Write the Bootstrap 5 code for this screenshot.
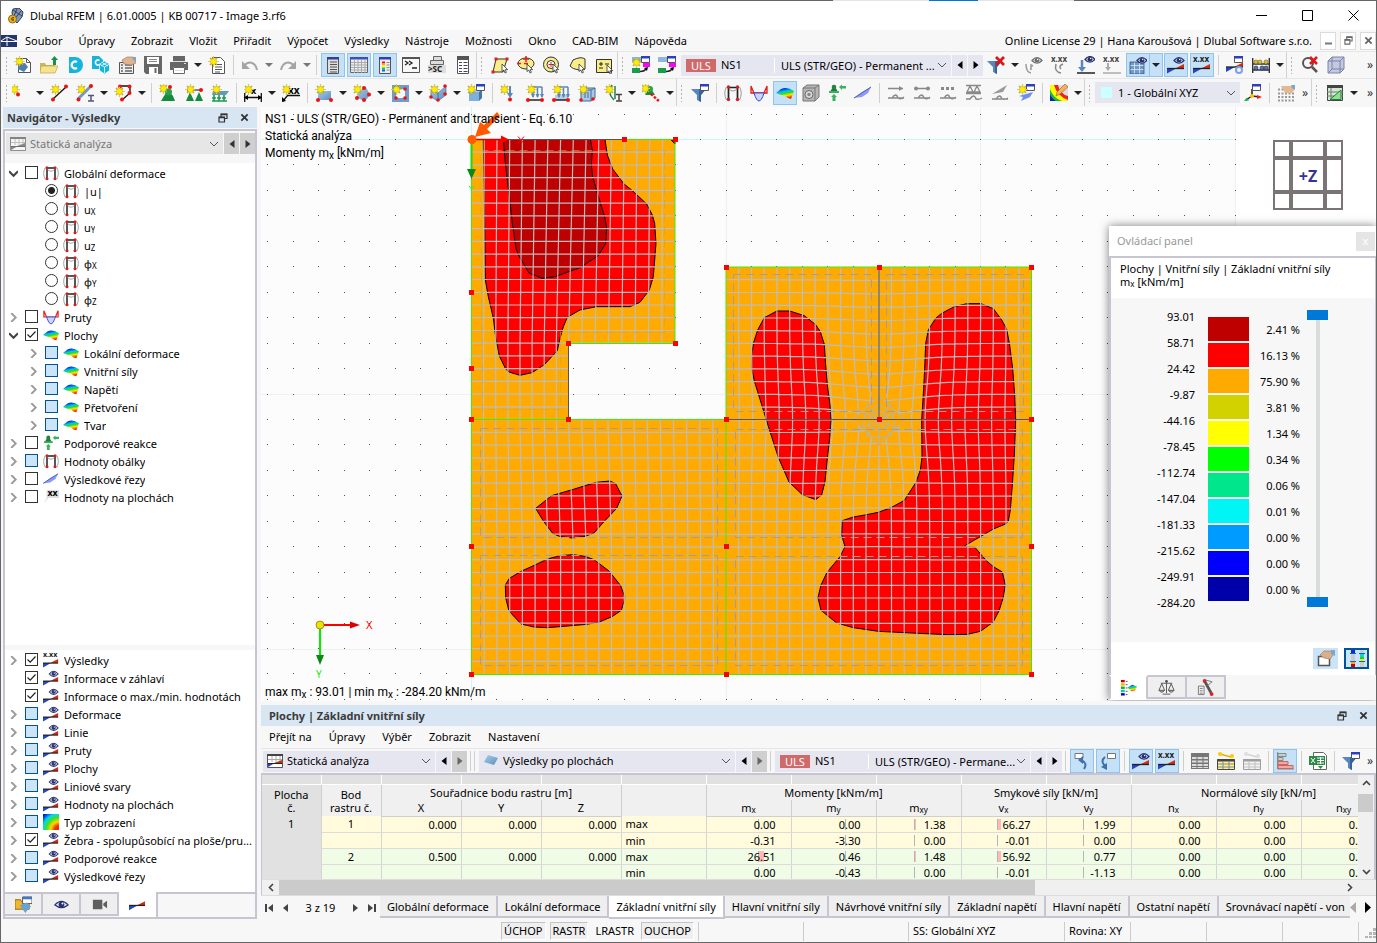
<!DOCTYPE html>
<html lang="cs">
<head>
<meta charset="utf-8">
<meta name="viewport" content="width=device-width, initial-scale=1">
<title>Dlubal RFEM | 6.01.0005 | KB 00717 - Image 3.rf6</title>
<link href="https://cdn.jsdelivr.net/npm/bootstrap@5.3.0/dist/css/bootstrap.min.css" rel="stylesheet">
<style>
  :root { --chrome:#f7f7f7; --field:#e6e6f0; --edge:#c8c5d2; --press:#c5e1f7; --pressed-edge:#8ec4ee; --head:#d8e5f3; }
  body { font-family:"Noto Sans","Open Sans",sans-serif; font-size:11px; line-height:16px; color:#000; background:var(--chrome); }
  .app { border:1px solid #666; border-top:0; }
  .topedge { height:1px; background:linear-gradient(90deg,#666 60.5%,#e5e5e5 0 67.5%,#0078d7 0 71%,#e5e5e5 0 78%,#666 0); }
  button { border:0; background:none; padding:0; color:inherit; }
  a { color:inherit; text-decoration:none; }
  sub { font-size:8px; bottom:-1px; }
  svg { display:block; flex:none; }
  symbol { overflow:visible; }

  /* Title bar, menu and tool bars */
  .titlebar { height:29px; background:#fff; padding-left:7px; gap:6px; }
  .titlebar h1 { font-size:11px; line-height:16px; font-weight:400; margin:0; }
  .wbtn { width:46px; height:29px; display:flex; align-items:center; justify-content:center; }
  .menubar { height:21px; }
  .menubar .nav { gap:16px; }
  .mdi { width:16px; height:18px; border:1px solid #dcdcdc; background:#fff; display:flex; align-items:center; justify-content:center; }
  .toolrow { height:27px; border-top:1px solid #e6e6e6; padding-left:9px; overflow:hidden; }
  .toolrow.second { height:29px; padding:0 0 1px 7px; }
  .grip { width:3px; height:18px; background:radial-gradient(circle,#b4b4b4 1px,transparent 1px) 0 0/3px 4px; flex:none; }
  .toolrow > .grip.first { margin:0 2px 0 -5px; }
  .second > .grip.first { margin:0 0 0 -3px; }
  .tb { width:24px; height:24px; margin:0 1px; flex:none; display:flex; align-items:center; justify-content:center; border:1px solid transparent; }
  .tb svg { width:18px; height:18px; }
  .tb.on { background:var(--press); border-color:var(--pressed-edge); }
  .dd { width:12px; height:24px; flex:none; display:flex; align-items:center; justify-content:center; }
  .dd::after { content:""; border:4px solid transparent; border-top-color:#222; border-bottom:0; }
  .dd.dim::after { border-top-color:#777; }
  .dd.on { background:var(--press); border:1px solid var(--pressed-edge); border-left:0; margin-left:-1px; width:13px; }
  .vs { width:1px; height:20px; margin:0 3px; background:#cfcfcf; flex:none; }
  .gs { width:11px; height:27px; border-left:1px solid #d2d2d2; display:flex; align-items:center; padding-left:3px; flex:none; }
  .more { width:12px; font-size:12px; color:#333; flex:none; text-align:center; }
  .fieldbox { height:21px; background:var(--field); display:flex; align-items:center; flex:none; }
  .pick { appearance:none; border:0; border-radius:0; height:21px; line-height:16px; padding:0 15px 0 0; color:#000; font-size:11px; min-width:0; outline:0;
    background:transparent url("data:image/svg+xml,%3Csvg xmlns='http://www.w3.org/2000/svg' viewBox='0 0 10 6'%3E%3Cpath d='M1 1l4 4 4-4' fill='none' stroke='%23555'/%3E%3C/svg%3E") right 4px center/10px 6px no-repeat; }
  .tagu { background:#d0696a; color:#fff; width:30px; height:13px; line-height:13px; text-align:center; margin:0 5px; }
  .nsn { width:53px; }
  .lc1 { width:270px; margin-left:1px; }
  .lc2 { width:255px; margin-left:1px; }
  .lcpick { flex:1; border-left:1px solid #fff; padding-left:6px; height:15px; line-height:15px; }
  .swatch { width:11px; height:11px; background:#cff; margin:0 6px 0 6px; }
  .cspick { width:122px; }
  .anpick { width:152px; }
  .srpick { width:236px; }
  .step { width:15px; height:21px; background:var(--field); margin-left:1px; flex:none; display:flex; align-items:center; justify-content:center; }
  .step.off { background:#cfcfcf; color:#666; }
  .step svg { width:6px; height:8px; fill:currentColor; }

  /* Navigator */
  .panehead { height:21px; background:var(--head); color:#3b3b3b; padding:0 4px; }
  .panehead h2 { font-size:11px; line-height:16px; font-weight:700; margin:0; }
  .side { width:260px; padding-left:2px; flex:none; }
  .side .panehead { width:254px; }
  .sideframe { border:2px solid var(--edge); width:254px; margin-top:1px; background:#fff; }
  .sidepick { background:var(--chrome); padding:2px 0 9px 1px; }
  .sidepick .fieldbox { background:#e6e6e6; flex:1; }
  .sidepick .pick { color:#777; opacity:1; }
  .sidepick .step { background:#cfcfcf; color:#333; }
  .tree { list-style:none; margin:0; padding:1px 0 0 0; }
  .tree li { height:18px; display:flex; align-items:center; white-space:nowrap; overflow:hidden; }
  .tree label { overflow:hidden; text-overflow:ellipsis; padding-top:2px; }
  .tree .sp, .tree button { width:20px; height:16px; flex:none; display:flex; align-items:center; padding-left:4px; }
  .tree .in { width:20px; flex:none; }
  .tree input { appearance:none; width:13px; height:13px; border:1px solid #333; background:#fff center/11px 11px no-repeat; margin:0 5px 2px 0; flex:none; }
  .tree input[type=radio] { border-radius:50%; }
  .tree input[type=radio]:checked { background-image:radial-gradient(circle,#222 3px,transparent 4px); }
  .tree input[type=checkbox]:checked { background-image:url("data:image/svg+xml,%3Csvg xmlns='http://www.w3.org/2000/svg' viewBox='0 0 11 11'%3E%3Cpath d='M1.500 5.500l2.700 2.700L9.500 2.500' fill='none' stroke='%23222' stroke-width='1.200'/%3E%3C/svg%3E"); }
  .tree input.part { background-color:#cce4f7; border-color:#00539a; }
  .tree li > svg { width:16px; height:16px; margin:0 5px 1px 0; }
  .split { height:5px; background:var(--chrome); }
  .sidetabs { background:var(--chrome); border-top:2px solid var(--edge); height:25px; margin-top:7px; }
  .sidetabs button { width:38px; height:22px; border-right:2px solid var(--edge); border-bottom:2px solid var(--edge); background:#efefef; display:flex; align-items:center; justify-content:center; }
  .sidetabs .on { background:#fff; margin-top:-2px; height:25px; width:39px; border-bottom:0; }
  .sidetabs svg { width:17px; height:17px; }

  /* Model view and control panel */
  .view { background:#fff; overflow:hidden; min-height:0; }
  .view > svg { width:100%; height:100%; }
  .note { font-family:Roboto,"Noto Sans",sans-serif; font-size:12px; line-height:17px; }
  .note sub { font-size:10px; bottom:-2px; line-height:0; }
  .cube { top:33px; right:33px; width:70px; height:70px; background:#7a7574; display:grid; grid-template-columns:14px 30px 14px; grid-template-rows:14px 30px 14px; gap:4px; padding:2px; box-sizing:border-box; }
  .cube > * { background:#fff; }
  .cube b { color:#333399; font-size:16px; line-height:32px; text-align:center; }
  .control { right:0; bottom:1px; width:267px; background:#fff; box-shadow:0 0 9px rgba(0,0,0,.5); }
  .ctitle { height:30px; padding:0 1px 0 8px; color:#999; }
  .ctitle h2 { font-size:11px; line-height:16px; margin:0; font-weight:400; }
  .ctitle button { width:19px; height:19px; background:#e5e5e5; color:#fff; }
  .cbody { border:2px solid var(--edge); border-right-width:1px; border-bottom:0; }
  .ccap { line-height:13px; padding:4px 9px 10px; height:40px; }
  .legend { background:var(--chrome); height:344px; line-height:26px; }
  .lv { width:84px; padding-top:6px; text-align:right; }
  .ls { width:41px; margin-left:13px; padding-top:19px; }
  .ls i { display:block; height:24px; margin-bottom:2px; }
  .lp { width:51px; padding-top:19px; text-align:right; }
  .slide { width:21px; height:297px; margin:12px 0 0 7px; position:relative; background:linear-gradient(#d9dcdc,#d9dcdc) center/4px 100% no-repeat; }
  .slide input { position:absolute; top:0; left:21px; width:297px; height:21px; margin:0; appearance:none; background:none; transform-origin:0 0; transform:rotate(90deg); pointer-events:none; }
  .slide input::-webkit-slider-thumb { appearance:none; width:10px; height:21px; background:#0078d7; pointer-events:auto; }
  .cbtns { height:33px; gap:6px; padding-right:6px; }
  .cbtns button { width:25px; height:21px; background:#cce4f7; display:flex; align-items:center; justify-content:center; }
  .cbtns .on { border:2px solid #00539a; }
  .cbtns svg { width:18px; height:17px; }
  .ctabs { height:25px; background:var(--chrome); }
  .ctabs button { width:39px; height:24px; border:2px solid var(--edge); border-left:0; background:#efefef; display:flex; align-items:center; justify-content:center; }
  .ctabs .on { background:#fff; border-top-color:#fff; border-bottom-color:#fff; border-left:2px solid var(--edge); height:25px; }
  .ctabs svg { width:17px; height:17px; }

  /* Result table */
  .tpane { margin-top:4px; }
  .tmenu { height:22px; gap:17px; padding:0 8px; }
  .ttools { height:25px; border-top:1px solid #e6e6e6; padding-left:2px; overflow:hidden; }
  .tgrid { border:2px solid var(--edge); border-left-width:1px; border-bottom:1px solid #ddd; height:107px; overflow:hidden; }
  .tgrid table { width:1124px; flex:none; table-layout:fixed; border-collapse:collapse; }
  .tscroll { overflow:hidden; flex:1 1 0; min-width:0; }
  .w59 { width:59px; } .w60 { width:60px; } .w80 { width:80px; } .w85 { width:85px; }
  .tgrid th, .tgrid td { border-right:1px solid #d5d5d5; padding:0; height:16px; line-height:15px; font-weight:400; white-space:nowrap; overflow:hidden; }
  .tgrid th { background:#f0f0f0; text-align:center; border-color:#cfcfcf; }
  .tgrid .strip th { height:9px; background:#e1e1e1; border-right-color:#fff; border-bottom:1px solid #fff; }
  .tgrid .two { line-height:13px; padding-top:3px; vertical-align:top; }
  .tgrid .lead0 { background:#e1e1e1; }
  .tgrid .hd th { border-bottom:1px solid #cfcfcf; vertical-align:top; }
  .tgrid .grp { border-bottom:0; vertical-align:top; }
  .tgrid td { border-bottom:1px solid #dcdcdc; text-align:right; padding-right:15px; }
  .tgrid td.c { text-align:center; padding:0; } .tgrid td.l { text-align:left; padding-left:4px; } .tgrid td.n { padding-right:4px; }
  .tgrid .y td { background-color:#fffbdc; } .tgrid .g td { background-color:#f0fce6; }
  .tgrid td.lead0 { background:#e1e1e1; vertical-align:top; border-bottom:0; }
  .tgrid td.m { background-image:linear-gradient(#b5b5b5,#b5b5b5),linear-gradient(#ffb9b9,#ffb9b9); background-repeat:no-repeat; background-size:1px 11px,var(--bar,0) 11px; background-position:var(--at) 2px,var(--at) 2px; }
  .vbar { width:16px; background:#f0f0f0; flex:none; }
  .vbar .thumb { height:18px; background:#cbcbcb; width:15px; }
  .hbar { height:15px; background:#f0f0f0; border-left:1px solid var(--edge); padding-right:18px; }
  .hbar .thumb { height:15px; background:#cbcbcb; flex:0 0 69%; }
  .sb { width:17px; height:15px; display:flex; align-items:center; justify-content:center; flex:none; }
  .ftabs { height:24px; border-top:1px solid #ddd; overflow:hidden; }
  .ftabs .pager { width:119px; flex:none; padding:0 4px; }
  .pager svg { width:9px; height:8px; fill:#444; }
  .ftab { height:22px; line-height:21px; padding:0 7px; border:2px solid var(--edge); border-left:0; border-top:0; background:#efefef; white-space:nowrap; flex:none; }
  .ftab.on { background:#fff; height:23px; line-height:22px; }
  .ftab.cut { flex:0 1 132px; overflow:hidden; border-right:0; text-align:left; }

  /* Status bar */
  .status { height:23px; padding-top:3px; gap:4px; }
  .status button { height:18px; padding:0 2px; line-height:16px; border:1px solid #c4c4c4; border-right-color:#fff; border-bottom-color:#fff; background:#efefef; }
  .status button.flat { border-color:transparent; background:none; }
  .cell { height:19px; line-height:18px; border-left:1px solid #ccc; padding-left:4px; flex:none; }
  .s1 { width:105px; } .s2 { width:156px; } .s3 { width:66px; } .s4 { width:76px; } .s5 { width:18px; padding-left:3px; }
</style>
</head>
<body>
<svg width="0" height="0" class="position-absolute" aria-hidden="true">
<defs>
<linearGradient id="rb" x1=".3" x2=".6" y1="0" y2="1"><stop offset=".1" stop-color="#0030e0"/><stop offset=".35" stop-color="#00c8f0"/><stop offset=".5" stop-color="#20e020"/><stop offset=".7" stop-color="#ffe600"/><stop offset=".95" stop-color="#f02000"/></linearGradient>
<radialGradient id="rq" cx="1" cy="1" r="1.300"><stop offset=".2" stop-color="#f03000"/><stop offset=".4" stop-color="#ffd800"/><stop offset=".6" stop-color="#40e020"/><stop offset=".78" stop-color="#00d8f0"/><stop offset="1" stop-color="#0020d0"/></radialGradient>
<linearGradient id="bl" x1="0" x2="1" y1="0" y2="1"><stop offset="0" stop-color="#a9cbe8"/><stop offset="1" stop-color="#5d8fbd"/></linearGradient>
<g id="star"><path d="M5.500.5v10M.5 5.500h10M2 2l7 7M9 2L2 9" stroke="#a08c28" stroke-width="1.200"/><path d="M5.500 1v9M1 5.500h9M2.500 2.500l6 6M8.500 2.500l-6 6" stroke="#ffe900" stroke-width=".8"/><circle cx="5.500" cy="5.500" r="3" fill="#ffec00" stroke="#b9a421" stroke-width=".5"/></g>
<g id="win"><path d="M.5.5h8v6h-8z" fill="#fff" stroke="#555"/><path d="M0 0h9v2.500H0z" fill="#2b3fbf"/></g>
<g id="cur"><path d="M0 0v7.500l1.800-1.500 1.200 3 1.400-.6-1.200-2.800H5.700z" fill="#fff" stroke="#333" stroke-width=".8"/></g>
<g id="eye"><path d="M0 3.500Q5-2.500 10 3.500 5 9 0 3.500z" fill="#ccd2ec" stroke="#26306e" stroke-width="1.200"/><circle cx="5" cy="3.300" r="2.300" fill="#26306e"/><circle cx="5.700" cy="2.500" r=".7" fill="#fff"/></g>
<g id="wedge"><path d="M0 0h9L0 5z" fill="#2446c8"/><path d="M17-4.500V0H8z" fill="#d42c10"/><path d="M0 0h17" stroke="#222" stroke-width="1.300"/></g>
<symbol id="logo" viewBox="0 0 16 16"><path d="M5 1l6-1 4 4-1 5-5 6-4-4-1-7z" fill="#7f97b8" stroke="#333f59"/><path d="M5 2l9 6M9 1l-4 9M13 3L6 12" stroke="#33415e" fill="none"/><circle cx="4.500" cy="11" r="4" fill="#eab320" stroke="#8d6a12"/><path d="M6 9.500Q3.500 9 3.500 11.500 4 13 5.500 12.300 6 10.500 3.800 11" fill="none" stroke="#5d4300"/></symbol>
<symbol id="i-new" viewBox="0 0 18 18"><path d="M4.500 2.500h8l4 4v10h-12z" fill="#fff" stroke="#555"/><path d="M12.500 2.500v4h4" fill="none" stroke="#555"/><path d="M4 8l7-1 3 4-4 5-6-3z" fill="#4f7fb0"/><use href="#star"/></symbol>
<symbol id="i-open" viewBox="0 0 18 18"><path d="M0 7h5l1 2h9v8H0z" fill="#cdb65b"/><path d="M1 10h17l-3 7H0z" fill="#f5e38d" stroke="#b69c3e" stroke-width=".6"/><path d="M13 9V4h-2l3.500-4L18 4h-2v5z" fill="#14934a"/></symbol>
<symbol id="i-c" viewBox="0 0 18 18"><path d="M3 1h6a8 8 0 0 1 0 16H3z" fill="#14b4dc"/><path d="M11 6a3.500 3.500 0 1 0 0 6" fill="none" stroke="#fff" stroke-width="2.200"/></symbol>
<symbol id="i-blk" viewBox="0 0 18 18"><path d="M0 0h7l4 4v9H0z" fill="#14b4dc"/><path d="M7.500 4.500a2.500 2.500 0 1 0 0 4" fill="none" stroke="#fff" stroke-width="1.500"/><path d="M12.500 5l5 3v6.500l-5 3.500-5-3.500V8z" fill="#14b4dc" stroke="#fff" stroke-width=".7"/><path d="M7.500 8l5 3 5-3M12.500 11v6M10 6.500l6 3.500M15 6.500L9 10" stroke="#fff" fill="none" stroke-width=".8"/></symbol>
<symbol id="i-prop" viewBox="0 0 18 18"><path d="M1.500 6.500h14v11h-14z" fill="#eee" stroke="#555"/><path d="M3 9h2M3 12h2M3 15h2M7 9h7M7 12h7M7 15h7" stroke="#666" stroke-width="1.500"/><path d="M4 4l5-3 6 0 3 2v4l-5 2-7-1z" fill="#e0b48f" stroke="#9c7350" stroke-width=".6"/><path d="M14 1h4v5l-3-2z" fill="#7ea6c9"/></symbol>
<symbol id="i-save" viewBox="0 0 18 18"><path d="M0 0h18v18H2l-2-2z" fill="#676767"/><path d="M3 1h12v7H3zM5 11h9v7H5z" fill="#fff"/><path d="M5 3.500h8M5 5.500h8" stroke="#888"/><path d="M10.500 12h2v5h-2z" fill="#676767"/></symbol>
<symbol id="i-prn" viewBox="0 0 18 18"><path d="M3 0h12v6H3z" fill="#666"/><path d="M0 6h18v8h-3v-3H3v3H0z" fill="#666"/><path d="M3.500 11.500h11v6h-11z" fill="#fff" stroke="#666"/><path d="M5 14.500h8M14 7.500h2M3 5.500h12" stroke="#ddd"/></symbol>
<symbol id="i-rep" viewBox="0 0 18 18"><path d="M4.500 1.500h8l4 4v12h-12z" fill="#fff" stroke="#555"/><path d="M7 8.500h7M7 11h7M7 13.500h7M7 16h5" stroke="#555"/><use href="#star"/></symbol>
<symbol id="i-undo" viewBox="0 0 18 18"><path d="M3 10C7 5 14 5 16 14" fill="none" stroke="#a5a5a5" stroke-width="2"/><path d="M1 5v8h8z" fill="#a5a5a5"/></symbol>
<symbol id="i-redo" viewBox="0 0 18 18"><path d="M15 10C11 5 4 5 2 14" fill="none" stroke="#a5a5a5" stroke-width="2"/><path d="M17 5v8h-8z" fill="#a5a5a5"/></symbol>
<symbol id="i-nav" viewBox="0 0 18 18"><path d="M3.500 1.500h11v16h-11z" fill="#ddd" stroke="#555"/><path d="M3 1h12v2.500H3z" fill="#333f8f"/><path d="M6 6h7M6 8.500h7M6 11h7M6 13.500h7M6 16h7" stroke="#555"/></symbol>
<symbol id="i-tab" viewBox="0 0 18 18"><path d="M.5 1.500h17v15H.500z" fill="#eee" stroke="#666"/><path d="M0 1h18v2.500H0z" fill="#3b4fc4"/><path d="M1 6.500h16M1 9h16M1 11.500h16M1 14h16M4.500 4v13M8 4v13M11.500 4v13M15 4v13" stroke="#aaa"/></symbol>
<symbol id="i-leg" viewBox="0 0 18 18"><path d="M3.500 1.500h11v16h-11z" fill="#eee" stroke="#555"/><path d="M3 1h12v2.500H3z" fill="#2b3fbf"/><path d="M6 5.500h3v2H6z" fill="red"/><path d="M6 7.500h3v2H6z" fill="#fa0"/><path d="M6 9.500h3v2H6z" fill="#ff0"/><path d="M6 11.500h3v2H6z" fill="#0c6"/><path d="M6 13.500h3v2H6z" fill="#06f"/><path d="M10.500 6.500h3M10.500 9h3M10.500 11.500h3M10.500 14h3" stroke="#888"/></symbol>
<symbol id="i-con" viewBox="0 0 18 18"><path d="M.5 1.500h17v15H.500z" fill="#f7f7f7" stroke="#555"/><path d="M0 1h18v2H0z" fill="#555"/><path d="M3 5l3 2-3 2M7 5l3 2-3 2M10 12h5" fill="none" stroke="#222" stroke-width="1.300"/></symbol>
<symbol id="i-sc" viewBox="0 0 18 18"><path d="M5.500.5h8v4h-8zM2.500 4.500h13v4h-13z" fill="#ddd" stroke="#666"/><path d="M0 9h18v8H0z" fill="#ddd"/><text x="0" y="16" font-size="8" font-weight="700" fill="#222">&gt;SC</text></symbol>
<symbol id="i-calc" viewBox="0 0 18 18"><path d="M3.500.5h11v17h-11z" fill="#fff" stroke="#555"/><path d="M3 0h12v4H3z" fill="#555"/><path d="M5 6.500h3M5 9.500h3M5 12.500h3M5 15.500h3M9.500 6.500h4M9.500 9.500h4M9.500 12.500h4M9.500 15.500h4" stroke="#446"/></symbol>
<symbol id="s-poly" viewBox="0 0 18 18"><path d="M5 3h11l-4 13H2z" fill="#f7ee8a" stroke="#333"/><path d="M3.500 1.500h3v3h-3zM14.500 1.500h3v3h-3zM.5 14.500h3v3h-3z" fill="#d22"/><use href="#cur" x="11" y="8"/></symbol>
<symbol id="s-ell" viewBox="0 0 18 18"><ellipse cx="9" cy="7.500" rx="8" ry="5.500" fill="#f7ee8a" stroke="#333"/><path d="M9 0v6M6 3h6M0 7.500h4M7 7.500h4" stroke="#d22" stroke-width="1.500"/><use href="#cur" x="10" y="8"/></symbol>
<symbol id="s-cir" viewBox="0 0 18 18"><circle cx="8" cy="8.500" r="7.500" fill="#f7ee8a" stroke="#333"/><circle cx="8" cy="8.500" r="4" fill="#fff" stroke="#333"/><path d="M8 6v5M5.500 8.500h5" stroke="#d22"/><use href="#cur" x="10" y="8"/></symbol>
<symbol id="s-fre" viewBox="0 0 18 18"><path d="M4 4q8-4 12-1v10q-4 2-6 1-7-1-9-4z" fill="#f7ee8a" stroke="#333"/><use href="#cur" x="10" y="8"/></symbol>
<symbol id="s-pm" viewBox="0 0 18 18"><path d="M1.500 3.500h15v13h-15z" fill="#f7ee8a" stroke="#333"/><path d="M4 8h4M6 6v4M4 12h4M10 8h4" stroke="#222"/><use href="#cur" x="12" y="9"/></symbol>
<symbol id="i-lc" viewBox="0 0 18 18"><path d="M0 1h9v5H0z" fill="#8fb5e0"/><use href="#win" x="9" y="0"/><path d="M11 7h7v4h-7z" fill="#f0f"/><path d="M0 12h8v5H0z" fill="#1a9c4c"/><path d="M8 15.500q5 0 6-3" fill="none" stroke="#222" stroke-width="1.500"/><path d="M16 11l-4 1 3 3z"/></symbol>
<symbol id="i-lcn" viewBox="0 0 18 18"><use href="#i-lc"/><use href="#star" x="-1" y="1"/></symbol>
<symbol id="i-flt" viewBox="0 0 18 18"><path d="M0 5h15l-5 6v7l-4-2v-5z" fill="#5a86bb"/><path d="M8 5h7l-5 6v7l-2-1z" fill="#34649e"/></symbol>
<symbol id="i-fltx" viewBox="0 0 18 18"><use href="#i-flt"/><path d="M9 1l8 8M17 1L9 9" stroke="#d81818" stroke-width="2.800"/></symbol>
<symbol id="i-fltw" viewBox="0 0 18 18"><use href="#i-flt"/><use href="#win" x="9" y="0"/></symbol>
<symbol id="g-eye" viewBox="0 0 18 18" opacity=".7"><use href="#eye" x="7" y="1" style="filter:grayscale(1)"/><path d="M1 8q0 8 5 9M6 8v6q-1-3 2-5" fill="none" stroke="#777" stroke-width="1.500"/></symbol>
<symbol id="g-xx" viewBox="0 0 18 18"><text x="0" y="6" font-size="8" font-weight="700" fill="#444">x.xx</text><path d="M5 8q-2 8 5 9M12 8q-5 2-2 5" fill="none" stroke="#888" stroke-width="1.500"/></symbol>
<symbol id="l-eye" viewBox="0 0 18 18"><use href="#eye" x="8"/><path d="M5 4v8" stroke="#5b87bb" stroke-width="2.500"/><path d="M1 11h8l-4 5z" fill="#5b87bb"/><path d="M0 17h18" stroke="#222" stroke-width="1.500"/></symbol>
<symbol id="l-xx" viewBox="0 0 18 18"><text x="0" y="6" font-size="8" font-weight="700" fill="#444">x.xx</text><path d="M5 7v5" stroke="#aaa" stroke-width="2"/><path d="M2 11h6l-3 4z" fill="#aaa"/><path d="M0 17h18" stroke="#aaa" stroke-width="1.500"/></symbol>
<symbol id="m-eye" viewBox="0 0 18 18"><path d="M1 6h14v12H1z" fill="#6f9cc8"/><path d="M1 9.500h14M1 13.500h14M5.500 6v12M10.500 6v12" stroke="#dbe8f5" stroke-width=".8"/><path d="M1 6h14v12H1z" fill="none" stroke="#2c3f66" stroke-width=".7"/><use href="#eye" x="8" y="1"/></symbol>
<symbol id="w-eye" viewBox="0 0 18 18"><use href="#eye" x="7" y="1"/><use href="#wedge" y="12.500"/></symbol>
<symbol id="w-xx" viewBox="0 0 18 18"><text x="0" y="6" font-size="8" font-weight="700" fill="#222">x.xx</text><use href="#wedge" y="12.500"/></symbol>
<symbol id="w-win" viewBox="0 0 18 18"><use href="#win" x="8"/><use href="#wedge" y="11"/><circle cx="13" cy="14" r="3" fill="none" stroke="#7aa0e8" stroke-width="2"/></symbol>
<symbol id="w-only" viewBox="0 0 18 18"><use href="#wedge" y="10"/></symbol>
<symbol id="i-aba" viewBox="0 0 18 18"><path d="M.7 2v15M17.300 2v15M0 8h18M0 14h18" stroke="#333" stroke-width="1.400"/><g fill="#d8c23c" stroke="#6b5b11" stroke-width=".6"><circle cx="4" cy="6" r="2"/><circle cx="8" cy="6" r="2"/><circle cx="14" cy="6" r="2"/></g><g fill="#5673c9" stroke="#222" stroke-width=".6"><circle cx="4" cy="12" r="2"/><circle cx="10" cy="12" r="2"/><circle cx="14" cy="12" r="2"/></g></symbol>
<symbol id="i-zx" viewBox="0 0 18 18"><circle cx="7" cy="7" r="5" fill="none" stroke="#555" stroke-width="2"/><path d="M11 11l5 5" stroke="#555" stroke-width="2.500"/><path d="M9 1l7 7M16 1L9 8" stroke="#e01818" stroke-width="2.600"/></symbol>
<symbol id="i-cub" viewBox="0 0 18 18"><path d="M1 5l4-4h12v12l-4 4H1z" fill="#c3c9e0" stroke="#7b84a8"/><path d="M1 5h12v12M13 5l4-4M5 1v12h12M1 17l4-4" fill="none" stroke="#7b84a8"/></symbol>
<symbol id="a-node" viewBox="0 0 18 18"><use href="#star" x="-3"/><circle cx="6" cy="10.500" r="2" fill="#e11"/></symbol>
<symbol id="a-line" viewBox="0 0 18 18"><path d="M3 15L16 3" stroke="#111" stroke-width="1.300"/><circle cx="3" cy="15.500" r="2" fill="#e11"/><circle cx="16" cy="2.500" r="2" fill="#e11"/><use href="#star"/></symbol>
<symbol id="a-mem" viewBox="0 0 18 18"><path d="M2 15L15 2" stroke="#6b9ac9" stroke-width="3"/><circle cx="2.500" cy="15.500" r="2" fill="#e11"/><circle cx="15" cy="2" r="2" fill="#e11"/><path d="M12 11.500h6M12 17h6M15 11v6" stroke="#557" stroke-width="1.500"/><use href="#star"/></symbol>
<symbol id="a-arc" viewBox="0 0 18 18"><path d="M6 2h10v7L8 16" fill="none" stroke="#111" stroke-width="1.300"/><g fill="#e11"><circle cx="6" cy="2.500" r="2"/><circle cx="15.500" cy="2.500" r="2"/><circle cx="15.500" cy="9" r="2"/><circle cx="8" cy="15.500" r="2"/></g><use href="#star" y="2"/></symbol>
<symbol id="a-sup" viewBox="0 0 18 18"><path d="M9 6l5 6 2 5H2l3-5z" fill="#148a3c"/><circle cx="9.500" cy="8" r="3.500" fill="#25a352"/><circle cx="11" cy="3" r="2" fill="#e11"/><use href="#star" x="-1" y="-1"/></symbol>
<symbol id="a-ls" viewBox="0 0 18 18"><path d="M2 6h14" stroke="#111"/><path d="M5 8l4 9H1zM14 8l4 9h-8z" fill="#148a3c"/><circle cx="4" cy="6" r="2" fill="#e11"/><circle cx="16" cy="6" r="2" fill="#e11"/><use href="#star"/></symbol>
<symbol id="a-ss" viewBox="0 0 18 18"><path d="M2 7h16l-3 4H1z" fill="#5c9dba"/><path d="M3 11v6M8 11v6M13 11v6M1 14h4M6 14h4M11 14h4M1 17h15" stroke="#1c9a50" stroke-width="1.600"/><use href="#star"/></symbol>
<symbol id="a-dim" viewBox="0 0 18 18"><path d="M.7 9v9M17.300 9v9M1 13.500h16" stroke="#111" stroke-width="1.300"/><path d="M0 13.500l4-2.500v5zM18 13.500l-4-2.500v5z"/><text x="7" y="10" font-size="9" font-weight="700">x</text><use href="#star" x="-1"/></symbol>
<symbol id="a-xx" viewBox="0 0 18 18"><path d="M5 11.500h13M6 11L1 17" stroke="#111" stroke-width="1.300"/><path d="M0 18v-5l4 4z"/><text x="6" y="10" font-size="10" font-weight="700">xx</text><use href="#star" x="-1"/></symbol>
<symbol id="a-rec" viewBox="0 0 18 18"><path d="M3 7h13v9H3z" fill="url(#bl)"/><circle cx="3" cy="16" r="2" fill="#e11"/><circle cx="16" cy="16" r="2" fill="#e11"/><use href="#star"/></symbol>
<symbol id="a-pol" viewBox="0 0 18 18"><path d="M5 7l8-4 4 8-5 6-8-3z" fill="url(#bl)"/><g fill="#e11"><circle cx="4" cy="14" r="2"/><circle cx="11" cy="4" r="2"/><circle cx="16" cy="10.500" r="2"/><circle cx="11" cy="16" r="2"/></g><use href="#star" x="-1"/></symbol>
<symbol id="a-opn" viewBox="0 0 18 18"><path d="M3 3h13v13H3z" fill="none" stroke="#6f9ccb" stroke-width="4"/><g fill="#e11"><circle cx="5" cy="14" r="1.800"/><circle cx="14" cy="5" r="1.800"/><circle cx="14" cy="14" r="1.800"/></g><use href="#star"/></symbol>
<symbol id="a-sol" viewBox="0 0 18 18"><path d="M2 6l7 3 8-7v9l-8 6-7-4z" fill="url(#bl)" stroke="#44719d" stroke-width=".7"/><path d="M9 9v8" stroke="#44719d"/><g fill="#e11"><circle cx="2" cy="13" r="1.800"/><circle cx="9" cy="16" r="1.800"/><circle cx="16" cy="2" r="1.800"/><circle cx="16" cy="10" r="1.800"/></g><use href="#star"/></symbol>
<symbol id="a-box" viewBox="0 0 18 18"><path d="M2 8h10v9H2z" fill="#7fb0de"/><path d="M2 8l3-3h10l-3 3z" fill="#a9cdec"/><path d="M12 8l3-3v9l-3 3z" fill="#3f78ac"/><use href="#win" x="9"/><use href="#star" x="-1"/></symbol>
<symbol id="f-n" viewBox="0 0 18 18"><path d="M10 2v8" stroke="#5887bb" stroke-width="2"/><path d="M7 9h6l-3 5z" fill="#5887bb"/><circle cx="10" cy="15.500" r="2" fill="#e11"/><use href="#star" x="-1"/></symbol>
<symbol id="f-l" viewBox="0 0 18 18"><path d="M5 3h11M7 4v9M11.500 4v9M16 3v10" stroke="#5887bb" stroke-width="1.500" fill="none"/><path d="M5 10h4l-2 4zM9.500 10h4l-2 4zM14 10h4l-2 4z" fill="#5887bb"/><path d="M2 16h14" stroke="#222" stroke-width="1.500"/><circle cx="2" cy="16" r="2" fill="#e11"/><circle cx="16" cy="16" r="2" fill="#e11"/><use href="#star"/></symbol>
<symbol id="f-s" viewBox="0 0 18 18"><path d="M3 11h13v5H3z" fill="#b8cfe6"/><use href="#f-l"/></symbol>
<symbol id="f-v" viewBox="0 0 18 18"><path d="M3 6l4-2h10v10l-4 3H3z" fill="#a9c8e6" stroke="#456f9a"/><path d="M3 6h10v11M13 6l4-2M7 8v6M10 8v6" fill="none" stroke="#456f9a"/><circle cx="3" cy="16" r="1.800" fill="#e11"/><circle cx="15" cy="15" r="1.800" fill="#e11"/><use href="#star"/></symbol>
<symbol id="f-c" viewBox="0 0 18 18"><path d="M8 1q-6 7 2 15M11 2v13" fill="none" stroke="#25804a" stroke-width="1.500"/><path d="M12 10.500h6M12 17h6M15 10v7" stroke="#444" stroke-width="1.500"/><use href="#star"/></symbol>
<symbol id="f-d" viewBox="0 0 18 18"><path d="M8 3l5 8H3z" fill="#1b8a40"/><circle cx="8" cy="5" r="3" fill="#25a352"/><path d="M9 10l9 8" stroke="#e11" stroke-width="2.500" stroke-dasharray="2.500 1.500"/><use href="#star" x="-2" y="-1"/></symbol>
<symbol id="r-def" viewBox="0 0 18 18"><path d="M4.500 16V3.500h9V16" fill="none" stroke="#222" stroke-width="1.700"/><path d="M2.500 3Q-1 9 2.500 16M15.500 3q3.500 6 0 13M5 5q4 4 8 0" fill="none" stroke="#999"/><g fill="#c22"><circle cx="4.500" cy="3" r="1.700"/><circle cx="13.500" cy="3" r="1.700"/><circle cx="4.500" cy="15.500" r="1.700"/><circle cx="13.500" cy="15.500" r="1.700"/></g></symbol>
<symbol id="r-mom" viewBox="0 0 18 18"><path d="M1 2v7h16V2l-3 7H4z" fill="#fdd" stroke="#e02020" stroke-width="1.300"/><path d="M4 9q5 16 10 0z" fill="#cdd6ff" stroke="#3348d8"/></symbol>
<symbol id="r-srf" viewBox="0 0 18 18"><path d="M0 9L5 5Q11 2 18 7l-3 8-3-1Q9 11 5 11z" fill="url(#rb)"/></symbol>
<symbol id="r-sol" viewBox="0 0 18 18"><path d="M1 4l4-3h12v12l-4 4H1z" fill="#b5b5b5" stroke="#777"/><path d="M1 4h12v13M13 4l4-3" fill="none" stroke="#777"/><circle cx="7" cy="10.500" r="4" fill="#ddd" stroke="#666"/><circle cx="7" cy="10.500" r="1.800" fill="#888"/></symbol>
<symbol id="r-rea" viewBox="0 0 18 18"><path d="M6 1l4 7H2z" fill="#14803a"/><circle cx="6" cy="3" r="2.300" fill="#2b8048"/><path d="M1 7h10v2H1zM11 3l3-2.500V2h4v2.500h-4V6zM4.500 17v-4H3l3-3 3 3H7.500v4z" fill="#36b35c"/></symbol>
<symbol id="r-sec" viewBox="0 0 18 18"><path d="M0 14L8 8 17 3l-3 6-6 4z" fill="#8f97ff"/><path d="M0 14L17 3" stroke="#46a"/></symbol>
<symbol id="r-val" viewBox="0 0 18 18"><path d="M4 1h14v9H6l-5 6 3-6z" fill="#dedede"/><text x="5" y="8" font-size="10" font-weight="700">xx</text></symbol>
<symbol id="r-q" viewBox="0 0 18 18"><path d="M0 0h18v18H0z" fill="url(#rq)"/></symbol>
<symbol id="g-1" viewBox="0 0 18 18"><path d="M1 4.500h15M1 14h4q4-6 6 0 3 2 6-1M1 14h16" fill="none" stroke="#888" stroke-width="1.300"/><path d="M12 2L16 4.500 12 7z" fill="#888"/></symbol>
<symbol id="g-2" viewBox="0 0 18 18"><path d="M2 4.500h14M1 14h4q4-6 6 0 3 2 6-1M1 14h16" fill="none" stroke="#888" stroke-width="1.300"/><circle cx="3" cy="4.500" r="2" fill="#888"/><circle cx="15" cy="4.500" r="2" fill="#888"/></symbol>
<symbol id="g-3" viewBox="0 0 18 18"><path d="M2 4.500h14" stroke="#888" stroke-width="3" stroke-dasharray="3 2"/><path d="M1 14h4q4-6 6 0 3 2 6-1M1 14h16" fill="none" stroke="#888" stroke-width="1.300"/></symbol>
<symbol id="g-4" viewBox="0 0 18 18"><path d="M1 1.500h15M1 9.500h15M5 2l3 6H2zM12 2l3 6H9z" fill="none" stroke="#888" stroke-width="1.300"/><path d="M1 15h4q4-6 6 0 3 1 6-1" fill="none" stroke="#888" stroke-width="1.500"/></symbol>
<symbol id="g-5" viewBox="0 0 18 18"><path d="M1 10L16 1 12 8z" fill="#999"/><path d="M1 15h4q4-6 6 0 3 1 6-1M1 15h16" fill="none" stroke="#888" stroke-width="1.300"/></symbol>
<symbol id="g-6" viewBox="0 0 18 18"><path d="M2 12l14-4-3 5-9 4 2-4z" fill="#6f8ff0"/><use href="#win" x="9"/><use href="#star"/></symbol>
<symbol id="i-rbw" viewBox="0 0 18 18"><path d="M0 1h18v16H0z" fill="#ddd"/><path d="M0 1h8q2 9 10 11v5H0z" fill="#e22"/><path d="M0 1h4q3 11 14 15v1H0z" fill="#ff0"/><path d="M0 5q3 9 12 12H0z" fill="#1b4"/><path d="M0 10q2 5 6 7H0z" fill="#12a"/><path d="M7 8l8-8 3 3-8 7-4 2z" fill="#f3b25e" stroke="#a66b28" stroke-width=".7"/></symbol>
<symbol id="i-cs" viewBox="0 0 18 18"><path d="M8 5v7M8 12l-6 4M8 12l8 1" stroke="#222" stroke-width="1.500"/><path d="M0 17l5-.5-2-3z" fill="#1a4"/><path d="M18 13l-5-2v4z" fill="#e22"/><circle cx="8" cy="12" r="2" fill="#f6c800"/><use href="#win" x="8"/></symbol>
<symbol id="i-grd" viewBox="0 0 18 18"><path d="M1 5.500h16M1 9.500h16M1 13h16M1 16.500h16" stroke="#999" stroke-width="2" stroke-dasharray="2 1.500"/><path d="M4 2h11l3 2-3 5H8z" fill="#e3b892"/><path d="M14 1h4v5l-3-2z" fill="#7ea6c9"/></symbol>
<symbol id="i-cad" viewBox="0 0 18 18"><path d="M1.500 1.500h15v15h-15z" fill="#cfe9cf" stroke="#444"/><path d="M1 1h16v3H1z" fill="#444"/><path d="M1 8h16M1 12h16M5 4v13" stroke="#777"/><path d="M4 15.500L15 6v9.500z" fill="#8fe08f" stroke="#2a7a3a"/></symbol>
<symbol id="t-proj" viewBox="0 0 18 18"><path d="M0 4h6l1 2h8v8H0z" fill="#f0b72a" stroke="#8b6510"/><path d="M8 1h10v7H8z" fill="#fff" stroke="#555"/><path d="M8 1h10v2.500H8z" fill="#3f74d8"/><path d="M5 10l7-3 5 4-4 4-2 3z" fill="#6ba3cf"/></symbol>
<symbol id="t-eye" viewBox="0 0 18 18"><path d="M2 9.500Q9 2 16 9.500 9 15 2 9.500z" fill="#dfe3f2" stroke="#26306e" stroke-width="1.200"/><circle cx="9" cy="9" r="3" fill="#26306e"/><circle cx="10" cy="8" r="1" fill="#fff"/></symbol>
<symbol id="t-cam" viewBox="0 0 18 18"><path d="M2 4h10v10H2zM13 8l4-3v8l-4-3z" fill="#5f5f5f"/></symbol>
<symbol id="u-res" viewBox="0 0 16 16"><path d="M.5 1.500h15v13H.500z" fill="#fff" stroke="#555"/><path d="M0 1h16v2H0z" fill="#444"/><path d="M1 6.500h14M5 3v6M9 3v6M13 3v6" stroke="#aaa"/><path d="M1 10h7l-7 4z" fill="#2446c8"/><path d="M7 10l8-3v3z" fill="#d42c10"/><path d="M1 10.500h14" stroke="#222"/></symbol>
<symbol id="u-dia" viewBox="0 0 16 16"><path d="M5 2l10 3-4 7L1 9z" fill="url(#bl)"/></symbol>
<symbol id="b-a" viewBox="0 0 18 18"><path d="M2 1.500h8v5H2z" fill="#fff" stroke="#777"/><path d="M11 17q4-6-3-9" fill="none" stroke="#3f6fae" stroke-width="2"/><path d="M5 8l5-4v8z" fill="#3f6fae"/></symbol>
<symbol id="b-b" viewBox="0 0 18 18"><path d="M8.500 1.500h8v5h-8z" fill="#fff" stroke="#777"/><path d="M6 5q-5 4 0 9" fill="none" stroke="#3f6fae" stroke-width="2"/><path d="M8 11v7l-6-3z" fill="#3f6fae"/></symbol>
<symbol id="b-c" viewBox="0 0 18 18"><path d="M0 1h18v16H0z" fill="#777"/><path d="M1 5h16v2H1zM1 8.500h16v2H1zM1 12h16v2H1zM1 15h16v1H1z" fill="#ddd"/><path d="M6 1v16M12 1v16" stroke="#777"/></symbol>
<symbol id="b-d" viewBox="0 0 18 18"><path d="M3 2l11 3" stroke="#e0b400" stroke-width="1.500"/><circle cx="3" cy="2" r="2" fill="#ffc800"/><circle cx="15" cy="4" r="2" fill="#ffc800"/><path d="M.5 7.500h17v10H.500z" fill="#f8f39a" stroke="#444"/><path d="M0 8.500h18" stroke="#444" stroke-width="2"/><path d="M1 12h16M1 15h16M6 9v8M12 9v8" stroke="#888"/></symbol>
<symbol id="b-e" viewBox="0 0 18 18"><use href="#b-d" style="filter:grayscale(1) opacity(.5)"/></symbol>
<symbol id="b-f" viewBox="0 0 18 18"><path d="M1.500 0v17H18" fill="none" stroke="#888"/><path d="M2 1.500h8v3H2zM2 5.500h5v3H2z" fill="#bdd5cd" stroke="#888"/><path d="M2 9.500h10v3H2zM2 13.500h15v3H2z" fill="#f4a9a0" stroke="#c66"/></symbol>
<symbol id="b-g" viewBox="0 0 18 18"><path d="M4.500.5h10l3 3v14h-13z" fill="#fff" stroke="#666"/><path d="M0 4h16v9H0z" fill="#2e8b45"/><path d="M2 6l4 5M6 6l-4 5M8 6h7M8 8.500h7M8 11h7M11.500 5v7" stroke="#fff"/><path d="M9 14h5l-2.500 3z" fill="#2e8b45"/></symbol>
<symbol id="c-hand" viewBox="0 0 18 17"><path d="M1.500 6.500h11v9h-11z" fill="#fff" stroke="#555" stroke-width="1.500"/><path d="M3 5l4-4h7l3 3-4 5-6-1z" fill="#d9b08e" stroke="#9c7350" stroke-width=".6"/><path d="M14 0h4v6l-4-2z" fill="#7ea6c9"/></symbol>
<symbol id="c-bars" viewBox="0 0 18 17"><path d="M3 0h4v3H3z" fill="#1528c8"/><path d="M3 4h4v8H3z" fill="#ccc"/><path d="M3 12h4v2H3z" fill="#fa0"/><path d="M3 14h4v3H3z" fill="#c00"/><path d="M12 0h4v17h-4z" fill="#ccc"/><path d="M12 4h4v3h-4z" fill="#0dd"/><path d="M12 7h4v2h-4z" fill="#2c2"/><path d="M12 9h4v2h-4z" fill="#ee0"/><path d="M2 3.500h6M2 11.500h6M11 3.500h6M11 11.500h6" stroke="#06c" stroke-width="1.200"/></symbol>
<symbol id="c-t1" viewBox="0 0 18 18"><path d="M1 1h4v2.500H1z" fill="#b00"/><path d="M1 4.500h4V7H1z" fill="#fa0"/><path d="M1 8h4v2.500H1z" fill="#0b0"/><path d="M1 11.500h4V14H1z" fill="#0cc"/><path d="M1 15h4v2.500H1z" fill="#00b"/><path d="M6 2.500h2M6 6h2M6 9.500h2M6 13h2M6 16.500h2" stroke="#555"/><path d="M8 9l5-3 5 2-2 4-4 1z" fill="url(#rb)"/></symbol>
<symbol id="c-t2" viewBox="0 0 18 18"><path d="M9 2v13M3 4.500h12M5 16h8M4 5L1 12M4 5l3 7M14 5l-3 7M14 5l3 7" fill="none" stroke="#555"/><path d="M1 12h6q-3 4-6 0zM11 12h6q-3 4-6 0z" fill="#bbb" stroke="#555"/><circle cx="9" cy="2.500" r="1.500" fill="#555"/></symbol>
<symbol id="c-t3" viewBox="0 0 18 18"><path d="M1.500 7.500h6v9h-6z" fill="#eee" stroke="#777"/><path d="M3 10h3M3 12.500h3M3 15h3" stroke="#777"/><path d="M8 2l7 13" stroke="#555" stroke-width="3"/><path d="M9 1l7 2-5 4" fill="none" stroke="#777"/><circle cx="8" cy="2" r="2" fill="#d22"/><circle cx="15.500" cy="16" r="2" fill="#d22"/></symbol>
<symbol id="ar" viewBox="0 0 8 8"><path d="M0 2l4 4 4-4" fill="none" stroke="#444" stroke-width="1.800"/></symbol>
<symbol id="al" viewBox="0 0 8 8"><path d="M2 0l4 4-4 4" fill="none" stroke="#999" stroke-width="1.600"/></symbol>
<symbol id="tl" viewBox="0 0 6 8"><path d="M5.500 0v8L.5 4z"/></symbol>
<symbol id="trr" viewBox="0 0 6 8"><path d="M.5 0v8l5-4z"/></symbol>
<symbol id="flo" viewBox="0 0 10 10"><path d="M3 3.500V1h6v4.500H6.500M1 4h5.500v5H1z" fill="none" stroke="#333" stroke-width="1.200"/><path d="M1 4.500h5.500M3 1.500h6" stroke="#333" stroke-width="1.500"/></symbol>
<symbol id="xx" viewBox="0 0 10 10"><path d="M1.500 1.500l7 7M8.500 1.500l-7 7" stroke="#333" stroke-width="2"/></symbol>
</defs>
</svg>

<div class="vh-100 d-flex flex-column overflow-hidden">
<div class="topedge flex-shrink-0"></div>
<div class="app d-flex flex-column flex-grow-1 overflow-hidden">
<header class="flex-shrink-0">
  <div class="titlebar d-flex align-items-center">
    <svg width="16" height="16"><use href="#logo"/></svg><h1>Dlubal RFEM | 6.01.0005 | KB 00717 - Image 3.rf6</h1>
    <div class="ms-auto d-flex">
      <button class="wbtn" aria-label="Minimalizovat"><svg width="11" height="11"><path d="M0 5.500h11" stroke="#000"/></svg></button>
      <button class="wbtn" aria-label="Maximalizovat"><svg width="11" height="11"><path d="M.5.5h10v10H.500z" fill="none" stroke="#000"/></svg></button>
      <button class="wbtn" aria-label="Zavřít"><svg width="11" height="11"><path d="M.5.5l10 10M10.500.5l-10 10" stroke="#000"/></svg></button>
    </div>
  </div>
  <nav class="menubar d-flex align-items-center">
    <svg width="16" height="12" class="me-2" viewBox="0 0 16 12"><path d="M0 0h16v12H0z" fill="#24346e"/><path d="M0 6L6 2l10 4M0 6.500h16M6 2v9" fill="none" stroke="#fff"/></svg>
    <div class="nav">
      <a href="#">Soubor</a><a href="#">Úpravy</a><a href="#">Zobrazit</a><a href="#">Vložit</a><a href="#">Přiřadit</a><a href="#">Výpočet</a><a href="#">Výsledky</a><a href="#">Nástroje</a><a href="#">Možnosti</a><a href="#">Okno</a><a href="#">CAD-BIM</a><a href="#">Nápověda</a>
    </div>
    <span class="ms-auto me-1">Online License 29 | Hana Karoušová | Dlubal Software s.r.o.</span>
    <div class="d-flex gap-1 px-1 pe-0">
      <button class="mdi" aria-label="Minimalizovat okno"><svg width="7" height="9"><path d="M0 7.500h7" stroke="#6b7b8b" stroke-width="2"/></svg></button>
      <button class="mdi" aria-label="Obnovit okno"><svg width="9" height="9" opacity=".75"><use href="#flo"/></svg></button>
      <button class="mdi" aria-label="Zavřít okno"><svg width="9" height="9" opacity=".75"><use href="#xx"/></svg></button>
    </div>
  </nav>
  <div class="toolrow d-flex align-items-center" role="toolbar" aria-label="Hlavní nástroje">
    <span class="grip first"></span>
    <button class="tb" aria-label="Nový"><svg><use href="#i-new"/></svg></button><button class="tb" aria-label="Otevřít"><svg><use href="#i-open"/></svg></button><button class="tb" aria-label="Cloud"><svg><use href="#i-c"/></svg></button><button class="tb" aria-label="Bloky"><svg><use href="#i-blk"/></svg></button><button class="tb" aria-label="Vlastnosti"><svg><use href="#i-prop"/></svg></button><button class="tb" aria-label="Uložit"><svg><use href="#i-save"/></svg></button><button class="tb" aria-label="Tisk"><svg><use href="#i-prn"/></svg></button><button class="dd" aria-label="Možnosti tisku"></button><button class="tb" aria-label="Protokol"><svg><use href="#i-rep"/></svg></button>
    <span class="vs"></span>
    <button class="tb" aria-label="Zpět"><svg><use href="#i-undo"/></svg></button><button class="dd dim" aria-label="Historie zpět"></button><button class="tb" aria-label="Znovu"><svg><use href="#i-redo"/></svg></button><button class="dd dim" aria-label="Historie znovu"></button>
    <span class="vs"></span>
    <button class="tb on" aria-label="Navigátor"><svg><use href="#i-nav"/></svg></button><button class="tb on" aria-label="Tabulky"><svg><use href="#i-tab"/></svg></button><button class="tb on" aria-label="Panel"><svg><use href="#i-leg"/></svg></button><button class="tb" aria-label="Konzole"><svg><use href="#i-con"/></svg></button><button class="tb" aria-label="Skripty"><svg><use href="#i-sc"/></svg></button><button class="tb" aria-label="Seznam"><svg><use href="#i-calc"/></svg></button>
    <span class="gs"><span class="grip"></span></span>
    <button class="tb" aria-label="Výběr lichoběžníkem"><svg><use href="#s-poly"/></svg></button><button class="tb" aria-label="Výběr elipsou"><svg><use href="#s-ell"/></svg></button><button class="tb" aria-label="Výběr mezikružím"><svg><use href="#s-cir"/></svg></button><button class="tb" aria-label="Volný výběr"><svg><use href="#s-fre"/></svg></button><button class="tb" aria-label="Režim výběru"><svg><use href="#s-pm"/></svg></button>
    <span class="gs"><span class="grip"></span></span>
    <button class="tb" aria-label="Nový zatěžovací stav"><svg><use href="#i-lcn"/></svg></button><button class="tb" aria-label="Zatěžovací stavy"><svg><use href="#i-lc"/></svg></button>
    <div class="fieldbox lc1"><span class="tagu">ULS</span><span class="nsn">NS1</span><select class="pick lcpick" aria-label="Návrhová situace"><option>ULS (STR/GEO) - Permanent ...</option></select></div>
    <button class="step" aria-label="Předchozí"><svg><use href="#tl"/></svg></button><button class="step" aria-label="Další"><svg><use href="#trr"/></svg></button>
    <button class="tb" aria-label="Zrušit filtr"><svg><use href="#i-fltx"/></svg></button><button class="dd" aria-label="Filtry"></button><button class="tb" aria-label="Zobrazit zatížení"><svg><use href="#g-eye"/></svg></button><button class="tb" aria-label="Hodnoty zatížení"><svg><use href="#g-xx"/></svg></button><button class="tb" aria-label="Zatížení"><svg><use href="#l-eye"/></svg></button><button class="tb" aria-label="Hodnoty"><svg><use href="#l-xx"/></svg></button><button class="tb on" aria-label="Síť"><svg><use href="#m-eye"/></svg></button><button class="dd on" aria-label="Možnosti sítě"></button><button class="tb on" aria-label="Zobrazit výsledky"><svg><use href="#w-eye"/></svg></button><button class="tb on" aria-label="Hodnoty výsledků"><svg><use href="#w-xx"/></svg></button>
    <span class="vs"></span>
    <button class="tb" aria-label="Nastavení výsledků"><svg><use href="#w-win"/></svg></button><button class="tb" aria-label="Výpočet"><svg><use href="#i-aba"/></svg></button><button class="dd" aria-label="Možnosti výpočtu"></button>
    <span class="gs"><span class="grip"></span></span>
    <button class="tb" aria-label="Zrušit zvětšení"><svg><use href="#i-zx"/></svg></button><button class="tb" aria-label="Pohled"><svg><use href="#i-cub"/></svg></button>
    <button class="more ms-auto" aria-label="Více">»</button>
  </div>
  <div class="toolrow second d-flex align-items-center" role="toolbar" aria-label="Vkládání">
    <span class="grip first"></span>
    <button class="tb" aria-label="Uzel"><svg><use href="#a-node"/></svg></button><button class="dd" aria-label="Uzly"></button><button class="tb" aria-label="Linie"><svg><use href="#a-line"/></svg></button><button class="tb" aria-label="Prut"><svg><use href="#a-mem"/></svg></button><button class="dd" aria-label="Pruty"></button><button class="tb" aria-label="Lomená linie"><svg><use href="#a-arc"/></svg></button><button class="dd" aria-label="Linie další"></button>
    <span class="vs"></span>
    <button class="tb" aria-label="Podpora"><svg><use href="#a-sup"/></svg></button><button class="tb" aria-label="Liniová podpora"><svg><use href="#a-ls"/></svg></button><button class="tb" aria-label="Plošná podpora"><svg><use href="#a-ss"/></svg></button>
    <span class="vs"></span>
    <button class="tb" aria-label="Kóta"><svg><use href="#a-dim"/></svg></button><button class="dd" aria-label="Kóty"></button><button class="tb" aria-label="Poznámka"><svg><use href="#a-xx"/></svg></button>
    <span class="vs"></span>
    <button class="tb" aria-label="Plocha"><svg><use href="#a-rec"/></svg></button><button class="dd" aria-label="Plochy"></button><button class="tb" aria-label="Polygon"><svg><use href="#a-pol"/></svg></button><button class="dd" aria-label="Polygony"></button><button class="tb" aria-label="Otvor"><svg><use href="#a-opn"/></svg></button><button class="dd" aria-label="Otvory"></button><button class="tb" aria-label="Těleso"><svg><use href="#a-sol"/></svg></button><button class="dd" aria-label="Tělesa"></button><button class="tb" aria-label="Blok"><svg><use href="#a-box"/></svg></button>
    <span class="vs"></span>
    <button class="tb" aria-label="Uzlové zatížení"><svg><use href="#f-n"/></svg></button><button class="tb" aria-label="Liniové zatížení"><svg><use href="#f-l"/></svg></button><button class="tb" aria-label="Plošné zatížení"><svg><use href="#f-s"/></svg></button><button class="tb" aria-label="Zatížení tělesa"><svg><use href="#f-v"/></svg></button><button class="tb" aria-label="Imperfekce"><svg><use href="#f-c"/></svg></button><button class="dd" aria-label="Další zatížení"></button><button class="tb" aria-label="Deformace"><svg><use href="#f-d"/></svg></button><button class="dd" aria-label="Další deformace"></button>
    <span class="gs"><span class="grip"></span></span>
    <button class="tb" aria-label="Filtr výsledků"><svg><use href="#i-fltw"/></svg></button>
    <span class="vs"></span>
    <button class="tb" aria-label="Globální deformace"><svg><use href="#r-def"/></svg></button><button class="tb" aria-label="Výsledky na prutech"><svg><use href="#r-mom"/></svg></button><button class="tb on" aria-label="Výsledky na plochách"><svg><use href="#r-srf"/></svg></button><button class="tb" aria-label="Výsledky na tělesech"><svg><use href="#r-sol"/></svg></button><button class="tb" aria-label="Reakce"><svg><use href="#r-rea"/></svg></button><button class="tb" aria-label="Řezy"><svg><use href="#r-sec"/></svg></button>
    <span class="vs"></span>
    <button class="tb" aria-label="Průběh 1"><svg><use href="#g-1"/></svg></button><button class="tb" aria-label="Průběh 2"><svg><use href="#g-2"/></svg></button><button class="tb" aria-label="Průběh 3"><svg><use href="#g-3"/></svg></button><button class="tb" aria-label="Průběh 4"><svg><use href="#g-4"/></svg></button><button class="tb" aria-label="Průběh 5"><svg><use href="#g-5"/></svg></button><button class="tb" aria-label="Nový řez"><svg><use href="#g-6"/></svg></button>
    <span class="vs"></span>
    <button class="tb" aria-label="Barvy"><svg><use href="#i-rbw"/></svg></button><button class="dd" aria-label="Možnosti barev"></button>
    <span class="gs"><span class="grip"></span></span>
    <div class="fieldbox"><span class="swatch"></span><select class="pick cspick" aria-label="Souřadný systém"><option>1 - Globální XYZ</option></select></div>
    <button class="tb" aria-label="Osy"><svg><use href="#i-cs"/></svg></button>
    <span class="vs"></span>
    <button class="tb" aria-label="Rastr"><svg><use href="#i-grd"/></svg></button><button class="more" aria-label="Více rastr">»</button>
    <span class="gs"><span class="grip"></span></span>
    <button class="tb" aria-label="CAD"><svg><use href="#i-cad"/></svg></button><button class="dd" aria-label="CAD možnosti"></button>
    <button class="more ms-auto" aria-label="Více nástrojů">»</button>
  </div>
</header>

<div class="d-flex flex-grow-1 overflow-hidden">
<aside class="side d-flex flex-column">
  <div class="panehead d-flex align-items-center"><h2>Navigátor - Výsledky</h2>
    <button class="ms-auto me-2 pe-1" aria-label="Uvolnit panel"><svg width="10" height="10"><use href="#flo"/></svg></button><button aria-label="Zavřít panel" class="pe-1"><svg width="9" height="9"><use href="#xx"/></svg></button></div>
  <div class="sideframe flex-grow-1 d-flex flex-column">
    <div class="sidepick d-flex"><div class="fieldbox"><svg class="ms-1" width="16" height="16" style="filter:grayscale(1)" opacity=".6"><use href="#u-res"/></svg><select class="pick flex-grow-1 ps-1" disabled aria-label="Typ analýzy"><option>Statická analýza</option></select></div><button class="step" aria-label="Předchozí analýza"><svg><use href="#tl"/></svg></button><button class="step" aria-label="Další analýza"><svg><use href="#trr"/></svg></button></div>
    <ul class="tree flex-grow-1">
      <li><button aria-label="Sbalit"><svg width="9" height="9"><use href="#ar"/></svg></button><input type="checkbox" id="n1"><svg><use href="#r-def"/></svg><label for="n1">Globální deformace</label></li>
      <li><span class="sp"></span><span class="in"></span><input type="radio" name="u" id="n2" checked><svg><use href="#r-def"/></svg><label for="n2">|u|</label></li>
      <li><span class="sp"></span><span class="in"></span><input type="radio" name="u" id="n3"><svg><use href="#r-def"/></svg><label for="n3">u<sub>X</sub></label></li>
      <li><span class="sp"></span><span class="in"></span><input type="radio" name="u" id="n4"><svg><use href="#r-def"/></svg><label for="n4">u<sub>Y</sub></label></li>
      <li><span class="sp"></span><span class="in"></span><input type="radio" name="u" id="n5"><svg><use href="#r-def"/></svg><label for="n5">u<sub>Z</sub></label></li>
      <li><span class="sp"></span><span class="in"></span><input type="radio" name="u" id="n6"><svg><use href="#r-def"/></svg><label for="n6">φ<sub>X</sub></label></li>
      <li><span class="sp"></span><span class="in"></span><input type="radio" name="u" id="n7"><svg><use href="#r-def"/></svg><label for="n7">φ<sub>Y</sub></label></li>
      <li><span class="sp"></span><span class="in"></span><input type="radio" name="u" id="n8"><svg><use href="#r-def"/></svg><label for="n8">φ<sub>Z</sub></label></li>
      <li><button aria-label="Rozbalit"><svg width="9" height="9"><use href="#al"/></svg></button><input type="checkbox" id="n9"><svg><use href="#r-mom"/></svg><label for="n9">Pruty</label></li>
      <li><button aria-label="Sbalit"><svg width="9" height="9"><use href="#ar"/></svg></button><input type="checkbox" id="n10" checked><svg><use href="#r-srf"/></svg><label for="n10">Plochy</label></li>
      <li><span class="in"></span><button aria-label="Rozbalit"><svg width="9" height="9"><use href="#al"/></svg></button><input type="checkbox" class="part" id="n11"><svg><use href="#r-srf"/></svg><label for="n11">Lokální deformace</label></li>
      <li><span class="in"></span><button aria-label="Rozbalit"><svg width="9" height="9"><use href="#al"/></svg></button><input type="checkbox" class="part" id="n12"><svg><use href="#r-srf"/></svg><label for="n12">Vnitřní síly</label></li>
      <li><span class="in"></span><button aria-label="Rozbalit"><svg width="9" height="9"><use href="#al"/></svg></button><input type="checkbox" class="part" id="n13"><svg><use href="#r-srf"/></svg><label for="n13">Napětí</label></li>
      <li><span class="in"></span><button aria-label="Rozbalit"><svg width="9" height="9"><use href="#al"/></svg></button><input type="checkbox" class="part" id="n14"><svg><use href="#r-srf"/></svg><label for="n14">Přetvoření</label></li>
      <li><span class="in"></span><button aria-label="Rozbalit"><svg width="9" height="9"><use href="#al"/></svg></button><input type="checkbox" class="part" id="n15"><svg><use href="#r-srf"/></svg><label for="n15">Tvar</label></li>
      <li><button aria-label="Rozbalit"><svg width="9" height="9"><use href="#al"/></svg></button><input type="checkbox" id="n16"><svg><use href="#r-rea"/></svg><label for="n16">Podporové reakce</label></li>
      <li><button aria-label="Rozbalit"><svg width="9" height="9"><use href="#al"/></svg></button><input type="checkbox" class="part" id="n17"><svg><use href="#r-def"/></svg><label for="n17">Hodnoty obálky</label></li>
      <li><button aria-label="Rozbalit"><svg width="9" height="9"><use href="#al"/></svg></button><input type="checkbox" id="n18"><svg><use href="#r-sec"/></svg><label for="n18">Výsledkové řezy</label></li>
      <li><button aria-label="Rozbalit"><svg width="9" height="9"><use href="#al"/></svg></button><input type="checkbox" id="n19"><svg><use href="#r-val"/></svg><label for="n19">Hodnoty na plochách</label></li>
    </ul>
    <div class="split"></div>
    <ul class="tree">
      <li><button aria-label="Rozbalit"><svg width="9" height="9"><use href="#al"/></svg></button><input type="checkbox" id="d1" checked><svg><use href="#w-xx"/></svg><label for="d1">Výsledky</label></li>
      <li><span class="sp"></span><input type="checkbox" id="d2" checked><svg><use href="#w-eye"/></svg><label for="d2">Informace v záhlaví</label></li>
      <li><span class="sp"></span><input type="checkbox" id="d3" checked><svg><use href="#w-eye"/></svg><label for="d3">Informace o max./min. hodnotách</label></li>
      <li><button aria-label="Rozbalit"><svg width="9" height="9"><use href="#al"/></svg></button><input type="checkbox" class="part" id="d4"><svg><use href="#w-eye"/></svg><label for="d4">Deformace</label></li>
      <li><button aria-label="Rozbalit"><svg width="9" height="9"><use href="#al"/></svg></button><input type="checkbox" class="part" id="d5"><svg><use href="#w-eye"/></svg><label for="d5">Linie</label></li>
      <li><button aria-label="Rozbalit"><svg width="9" height="9"><use href="#al"/></svg></button><input type="checkbox" class="part" id="d6"><svg><use href="#w-eye"/></svg><label for="d6">Pruty</label></li>
      <li><button aria-label="Rozbalit"><svg width="9" height="9"><use href="#al"/></svg></button><input type="checkbox" class="part" id="d7"><svg><use href="#w-eye"/></svg><label for="d7">Plochy</label></li>
      <li><button aria-label="Rozbalit"><svg width="9" height="9"><use href="#al"/></svg></button><input type="checkbox" class="part" id="d8"><svg><use href="#w-eye"/></svg><label for="d8">Liniové svary</label></li>
      <li><button aria-label="Rozbalit"><svg width="9" height="9"><use href="#al"/></svg></button><input type="checkbox" class="part" id="d9"><svg><use href="#w-eye"/></svg><label for="d9">Hodnoty na plochách</label></li>
      <li><button aria-label="Rozbalit"><svg width="9" height="9"><use href="#al"/></svg></button><input type="checkbox" class="part" id="d10"><svg><use href="#r-q"/></svg><label for="d10">Typ zobrazení</label></li>
      <li><button aria-label="Rozbalit"><svg width="9" height="9"><use href="#al"/></svg></button><input type="checkbox" id="d11" checked><svg><use href="#w-eye"/></svg><label for="d11">Žebra - spolupůsobící na ploše/pru...</label></li>
      <li><button aria-label="Rozbalit"><svg width="9" height="9"><use href="#al"/></svg></button><input type="checkbox" class="part" id="d12"><svg><use href="#w-eye"/></svg><label for="d12">Podporové reakce</label></li>
      <li><button aria-label="Rozbalit"><svg width="9" height="9"><use href="#al"/></svg></button><input type="checkbox" class="part" id="d13"><svg><use href="#w-eye"/></svg><label for="d13">Výsledkové řezy</label></li>
    </ul>
    <div class="sidetabs d-flex"><button aria-label="Data"><svg><use href="#t-proj"/></svg></button><button aria-label="Zobrazení"><svg><use href="#t-eye"/></svg></button><button aria-label="Pohledy"><svg><use href="#t-cam"/></svg></button><button class="on" aria-label="Výsledky"><svg><use href="#w-only"/></svg></button></div>
  </div>
</aside>

<main class="d-flex flex-column flex-grow-1 overflow-hidden">
  <section class="view position-relative flex-grow-1">
    <svg viewBox="261 107 1115 594" preserveAspectRatio="xMinYMin meet" role="img" aria-label="Momenty mx na plochách">
      <defs>
        <clipPath id="model"><path d="M471.500 139.500H675V343.500H568.500V419.500H726V267H1031.500V674H471.500z"/></clipPath>
        <mask id="hole"><path d="M260 107h1116v594H260z" fill="#fff"/><path d="M879 396l26 23.500-26 26-26-26z" fill="#000"/></mask>
      </defs>
      <path d="M261 107h975v594H261z" fill="#fcfcfc"/>
      <path d="M726.500 107v594M980.500 107v594M1235.500 107v594M261 394.500h975M261 649.500h975" stroke="#f0f0f0" fill="none"/>
      <path d="M261 139.500h975M471.500 107v594" stroke="#cdf6f6" fill="none"/>
      <path id="dots" stroke="#555" fill="none" shape-rendering="crispEdges"/>
      <path d="M471.500 139.500H675V343.500H568.500V419.500H726V267H1031.500V674H471.500z" fill="#fa0"/>
      <g stroke="#000" stroke-width="3" fill="red" stroke-linejoin="round">
        <g transform="translate(460 100) scale(.33333)">
          <path d="M70 118L71 200 73 300 76 540 85 590 100 655 107 710 118 768 137 807 147 816 180 826 216 818 253 794 292 752 300 715 310 680 322 652 360 630 410 620 510 620 540 607 568 570 580 530 588 430 584 370 577 345 560 312 515 270 492 252 458 207 442 165 435 118"/>
          <path fill="#be0000" d="M130 118L137 200 147 280 157 370 168 445 175 465 207 519 247 535 285 530 360 503 415 467 437 430 440 385 434 350 412 280 398 230 394 195 397 150 391 118"/>
          <path d="M633 119h12v13z" fill="#333"/>
        </g>
        <g transform="translate(715 255) scale(.33333)">
          <path d="M186 168L224 168 268 182 302 209 316 230 328 268 332 330 337 390 345 450 348 495 344 550 337 610 330 680 320 720 302 734 262 719 222 681 190 607 165 530 148 475 118 378 110 340 110 300 116 262 128 225 148 188z"/>
          <path d="M778 875L815 918 835 935 862 951 871 990 864 1030 852 1068 834 1102 796 1129 757 1138 700 1139 610 1135 490 1129 415 1118 365 1104 318 1066 309 1028 318 990 336 952 375 905 390 875 380 840 382 797 415 786 450 780 490 772 530 757 568 736 603 682 616 645 621 607 620 495 626 400 629 340 632 265 640 225 662 190 680 175 718 155 755 146 798 146 835 161 860 195 875 222 884 270 893 340 899 420 902 495 898 600 892 690 886 765 880 798 872 807 835 822 748 873"/>
        </g>
        <g transform="translate(460 415) scale(.33333)">
          <path d="M227 280L275 242 340 223 408 202 450 198 467 206 486 243 470 280 432 320 402 354 375 364 338 369 300 365 278 355 250 318z"/>
          <path d="M136 510L148 490 185 468 225 450 262 432 300 422 338 419 375 424 402 434 447 468 482 512 495 548 484 586 456 605 418 621 380 628 300 635 260 638 222 636 183 627 147 588 137 548z"/>
        </g>
      </g>
      <g clip-path="url(#model)" fill="none">
        <path id="mesh" stroke="#bdbdbd" stroke-width="1.200" mask="url(#hole)"/>
        <g stroke="#b4b4b4">
          <path d="M879 396l26 23.500-26 26-26-26zM879 404l14 11 2 12-9 10h-14l-9-10 2-12zM879 410l8 6 2 8-5 6h-10l-5-6 2-8zM853 419.500h52M879 396v48M866 403l26 34M892 403l-26 34M858 410l42 20M900 410l-42 20"/>
        </g>
        <path stroke="#9f9f9f" stroke-dasharray="8 5" d="M480.500 428.500h237v109h-237zM480.500 555.500h237v110h-237zM733.500 274.500h138v137h-138zM886.500 274.500h137v137h-137zM735.500 429.500h287v108h-287zM735.500 556.500h287v109h-287z"/>
        <path stroke="#c8a832" stroke-dasharray="8 5" d="M480.500 150.500h184v182h-104v77h-78z" opacity=".6"/>
      </g>
      <path d="M490 139.500h135M568.500 343v76M471.500 293v76M726 419.500h305M879 267v152" stroke="#555" fill="none"/>
      <path d="M471.500 139v535M625 139.500h50v204H568M471 419.500h255V267h305.500v407.500H471M726 419v255" stroke="#3cf000" fill="none"/>
      <path id="nodes" fill="#f00"/>
      <path d="M471.500 140v35" stroke="#1d1" stroke-width="2"/><path d="M467 169h9l-4.500 10z" fill="#0a8a14"/>
      <path d="M476 139.500h30" stroke="#d00" stroke-width="1.500"/><path d="M501 135.500l8 4-8 4z" fill="red"/>
      <path d="M518 136.500l6 7M524 136.500l-6 7" stroke="red"/><path d="M469 186l2.500 3 2.500-3M471.500 189v2.500" stroke="#1f1" fill="none"/>
      <path d="M497 112l3 4-13 13 4 4-16 4 5-15 4 3z" fill="#ff5a00"/><circle cx="472" cy="139.500" r="4.500" fill="#ff5a00"/>
      <path d="M324 625h28" stroke="red" stroke-width="2"/><path d="M350 621.500l10 3.500-10 3.500z" fill="#d00"/><path d="M320 629v28" stroke="#0e0" stroke-width="2"/><path d="M316 655h8l-4 10z" fill="#0a8a14"/>
      <circle cx="320" cy="625" r="4" fill="#f0e000" stroke="#77700a" stroke-width=".7"/>
      <text x="366" y="629" font-size="11" fill="red">X</text><text x="316" y="678" font-size="10" fill="#1e1">Y</text>
    </svg>
    <div class="note position-absolute top-0 start-0 ps-1 pt-1">NS1 - ULS (STR/GEO) - Permanent and transient - Eq. 6.10<br>Statická analýza<br>Momenty m<sub>x</sub> [kNm/m]</div>
    <div class="note position-absolute bottom-0 start-0 ps-1">max m<sub>x</sub> : 93.01 | min m<sub>x</sub> : -284.20 kNm/m</div>
    <div class="cube position-absolute"><i></i><i></i><i></i><i></i><b>+Z</b><i></i><i></i><i></i><i></i></div>

    <div class="control position-absolute">
      <div class="ctitle d-flex align-items-center"><h2>Ovládací panel</h2><button class="ms-auto" aria-label="Zavřít ovládací panel">x</button></div>
      <div class="cbody">
        <div class="ccap">Plochy | Vnitřní síly | Základní vnitřní síly<br>m<sub>x</sub> [kNm/m]</div>
        <div class="legend d-flex">
          <div class="lv"><div>93.01</div><div>58.71</div><div>24.42</div><div>-9.87</div><div>-44.16</div><div>-78.45</div><div>-112.74</div><div>-147.04</div><div>-181.33</div><div>-215.62</div><div>-249.91</div><div>-284.20</div></div>
          <div class="ls"><i style="background:#be0000"></i><i style="background:#ff0000"></i><i style="background:#ffaa00"></i><i style="background:#d2d200"></i><i style="background:#ffff00"></i><i style="background:#00ff00"></i><i style="background:#00e68c"></i><i style="background:#00f5f5"></i><i style="background:#009bff"></i><i style="background:#0000ff"></i><i style="background:#0000aa"></i></div>
          <div class="lp"><div>2.41 %</div><div>16.13 %</div><div>75.90 %</div><div>3.81 %</div><div>1.34 %</div><div>0.34 %</div><div>0.06 %</div><div>0.01 %</div><div>0.00 %</div><div>0.00 %</div><div>0.00 %</div></div>
          <div class="slide"><input type="range" value="0" aria-label="Horní mez"><input type="range" value="100" aria-label="Dolní mez"></div>
        </div>
        <div class="cbtns d-flex align-items-center justify-content-end"><button aria-label="Nastavení"><svg><use href="#c-hand"/></svg></button><button class="on" aria-label="Stupnice"><svg><use href="#c-bars"/></svg></button></div>
      </div>
      <div class="ctabs d-flex"><button class="on" aria-label="Barevná stupnice"><svg><use href="#c-t1"/></svg></button><button aria-label="Faktory"><svg><use href="#c-t2"/></svg></button><button aria-label="Filtr"><svg><use href="#c-t3"/></svg></button></div>
    </div>
  </section>

  <section class="tpane flex-shrink-0">
    <div class="panehead d-flex align-items-center"><h2 class="ps-1 ms-0">Plochy | Základní vnitřní síly</h2><button class="ms-auto me-2 pe-1" aria-label="Uvolnit tabulku"><svg width="10" height="10"><use href="#flo"/></svg></button><button class="pe-1" aria-label="Zavřít tabulku"><svg width="9" height="9"><use href="#xx"/></svg></button></div>
    <nav class="tmenu d-flex align-items-center"><a href="#">Přejít na</a><a href="#">Úpravy</a><a href="#">Výběr</a><a href="#">Zobrazit</a><a href="#">Nastavení</a></nav>
    <div class="ttools d-flex align-items-center" role="toolbar" aria-label="Tabulka">
      <div class="fieldbox"><svg class="ms-1" width="16" height="16"><use href="#u-res"/></svg><select class="pick ps-1 anpick" aria-label="Analýza"><option>Statická analýza</option></select></div><button class="step" aria-label="Předchozí typ"><svg><use href="#tl"/></svg></button><button class="step off" aria-label="Další typ"><svg><use href="#trr"/></svg></button>
      <span class="vs"></span><span class="vs me-1 ms-0"></span>
      <div class="fieldbox"><svg class="ms-1" width="16" height="16"><use href="#u-dia"/></svg><select class="pick ps-1 srpick" aria-label="Výsledky"><option>Výsledky po plochách</option></select></div><button class="step" aria-label="Předchozí tabulka"><svg><use href="#tl"/></svg></button><button class="step off" aria-label="Další tabulka"><svg><use href="#trr"/></svg></button>
      <span class="vs"></span>
      <div class="fieldbox lc2"><span class="tagu">ULS</span><span class="nsn">NS1</span><select class="pick lcpick" aria-label="Situace"><option>ULS (STR/GEO) - Permane...</option></select></div><button class="step" aria-label="Předchozí situace"><svg><use href="#tl"/></svg></button><button class="step" aria-label="Další situace"><svg><use href="#trr"/></svg></button>
      <span class="vs"></span>
      <button class="tb on" aria-label="Přejít z grafiky"><svg><use href="#b-a"/></svg></button><button class="tb on" aria-label="Přejít do grafiky"><svg><use href="#b-b"/></svg></button>
      <span class="vs"></span>
      <button class="tb on" aria-label="Výsledky v tabulce"><svg><use href="#w-eye"/></svg></button><button class="tb on" aria-label="Hodnoty v tabulce"><svg><use href="#w-xx"/></svg></button>
      <span class="vs"></span>
      <button class="tb" aria-label="Řádky"><svg><use href="#b-c"/></svg></button><button class="tb" aria-label="Vybrané objekty"><svg><use href="#b-d"/></svg></button><button class="tb" aria-label="Objekty"><svg><use href="#b-e"/></svg></button>
      <span class="vs"></span>
      <button class="tb on" aria-label="Barevné pruhy"><svg><use href="#b-f"/></svg></button>
      <span class="vs"></span>
      <button class="tb" aria-label="Export"><svg><use href="#b-g"/></svg></button>
      <span class="vs"></span>
      <button class="tb" aria-label="Filtr tabulky"><svg><use href="#i-fltw"/></svg></button>
      <button class="more ms-auto" aria-label="Více tabulka">»</button>
    </div>
    <div class="tgrid d-flex">
      <div class="tscroll">
      <table>
        <colgroup><col class="w59"><col class="w60"><col span="3" class="w80"><col span="9" class="w85"></colgroup>
        <thead>
          <tr class="strip"><th></th><th></th><th></th><th></th><th></th><th></th><th></th><th></th><th></th><th></th><th></th><th></th><th></th><th></th></tr>
          <tr><th rowspan="2" class="two lead0">Plocha<br>č.</th><th rowspan="2" class="two">Bod<br>rastru č.</th><th colspan="3" class="grp">Souřadnice bodu rastru [m]</th><th rowspan="2"></th><th colspan="3" class="grp">Momenty [kNm/m]</th><th colspan="2" class="grp">Smykové síly [kN/m]</th><th colspan="3" class="grp">Normálové síly [kN/m]</th></tr>
          <tr class="hd"><th>X</th><th>Y</th><th>Z</th><th>m<sub>x</sub></th><th>m<sub>y</sub></th><th>m<sub>xy</sub></th><th>v<sub>x</sub></th><th>v<sub>y</sub></th><th>n<sub>x</sub></th><th>n<sub>y</sub></th><th>n<sub>xy</sub></th></tr>
        </thead>
        <tbody>
          <tr class="y"><td class="c lead0" rowspan="4">1</td><td class="c">1</td><td class="n">0.000</td><td class="n">0.000</td><td class="n">0.000</td><td class="l">max</td><td class="m" style="--at:51px">0.00</td><td class="m" style="--at:53px">0.00</td><td class="m" style="--at:37px;--bar:2px">1.38</td><td class="m" style="--at:35px;--bar:4px">66.27</td><td class="m" style="--at:36px">1.99</td><td>0.00</td><td>0.00</td><td>0.00</td></tr>
          <tr class="y"><td></td><td></td><td></td><td></td><td class="l">min</td><td class="m" style="--at:51px">-0.31</td><td class="m" style="--at:53px">-3.30</td><td class="m" style="--at:37px">0.00</td><td class="m" style="--at:35px">-0.01</td><td class="m" style="--at:36px">0.00</td><td>0.00</td><td>0.00</td><td>0.00</td></tr>
          <tr class="g"><td class="c">2</td><td class="n">0.500</td><td class="n">0.000</td><td class="n">0.000</td><td class="l">max</td><td class="m" style="--at:51px;--bar:6px">26.51</td><td class="m" style="--at:53px">0.46</td><td class="m" style="--at:37px;--bar:2px">1.48</td><td class="m" style="--at:35px;--bar:4px">56.92</td><td class="m" style="--at:36px">0.77</td><td>0.00</td><td>0.00</td><td>0.00</td></tr>
          <tr class="g"><td></td><td></td><td></td><td></td><td class="l">min</td><td class="m" style="--at:51px">0.00</td><td class="m" style="--at:53px">-0.43</td><td class="m" style="--at:37px">0.00</td><td class="m" style="--at:35px">-0.01</td><td class="m" style="--at:36px">-1.13</td><td>0.00</td><td>0.00</td><td>0.00</td></tr>
        </tbody>
      </table>
      </div>
      <div class="vbar d-flex flex-column"><span class="sb"><svg width="9" height="6"><path d="M1 5l3.500-3.500L8 5" fill="none" stroke="#444" stroke-width="1.600"/></svg></span><span class="thumb mt-1"></span><span class="sb mt-auto"><svg width="9" height="6"><path d="M1 1l3.500 3.500L8 1" fill="none" stroke="#444" stroke-width="1.600"/></svg></span></div>
    </div>
    <div class="hbar d-flex"><span class="sb"><svg width="6" height="9"><path d="M5 1L1.500 4.500 5 8" fill="none" stroke="#444" stroke-width="1.600"/></svg></span><span class="thumb"></span><span class="sb ms-auto"><svg width="6" height="9"><path d="M1 1l3.500 3.500L1 8" fill="none" stroke="#444" stroke-width="1.600"/></svg></span></div>
    <div class="ftabs d-flex">
      <div class="pager d-flex align-items-center justify-content-between">
        <button aria-label="První"><svg viewBox="0 0 9 8"><path d="M0 0h2v8H0zM8 0v8L3 4z"/></svg></button><button aria-label="Předchozí strana"><svg viewBox="0 0 9 8"><path d="M7 0v8L2 4z"/></svg></button><span class="px-2">3 z 19</span><button aria-label="Další strana"><svg viewBox="0 0 9 8"><path d="M2 0v8l5-4z"/></svg></button><button aria-label="Poslední"><svg viewBox="0 0 9 8"><path d="M7 0h2v8H7zM1 0v8l5-4z"/></svg></button>
      </div>
      <button class="ftab">Globální deformace</button><button class="ftab">Lokální deformace</button><button class="ftab on">Základní vnitřní síly</button><button class="ftab">Hlavní vnitřní síly</button><button class="ftab">Návrhové vnitřní síly</button><button class="ftab">Základní napětí</button><button class="ftab">Hlavní napětí</button><button class="ftab">Ostatní napětí</button><button class="ftab cut">Srovnávací napětí - von</button>
      <div class="ms-auto d-flex align-items-center gap-2 pe-1"><button aria-label="Karty vlevo"><svg width="7" height="11"><path d="M6 0v11L0 5.500z" fill="#aaa"/></svg></button><button aria-label="Karty vpravo"><svg width="7" height="11"><path d="M0 0v11l6-5.500z"/></svg></button></div>
    </div>
  </section>
</main>
</div>

<footer class="status d-flex flex-shrink-0">
  <button class="ms-auto">ÚCHOP</button><button>RASTR</button><button class="flat">LRASTR</button><button>OUCHOP</button>
  <div class="d-flex"><div class="cell s1"></div><div class="cell s1"></div><div class="cell s2">SS: Globální XYZ</div><div class="cell s3">Rovina: XY</div><div class="cell s4"></div><div class="cell s4"></div><div class="cell s4"></div><div class="cell s5"><svg width="14" height="16" fill="#b5b5b5"><path d="M11 6h3v3h-3zM7 10h3v3H7zM11 10h3v3h-3zM3 14h3v3H3zM7 14h3v3H7zM11 14h3v3h-3z"/></svg></div></div>
</footer>
</div>
</div>
<script src="https://cdn.jsdelivr.net/npm/bootstrap@5.3.0/dist/js/bootstrap.bundle.min.js"></script>
<script>
  // Snap grid, 1 m apart, origin at the upper left node of the model
  const X0 = 471.5, Y0 = 139.5, M = 25.45;
  let dots = '';
  for (let i = -8; i <= 30; i++) for (let j = -1; j <= 22; j++)
    dots += `M${Math.round(X0 + i * M - .5)} ${Math.round(Y0 + j * M - .5) + .5}h1`;
  document.getElementById('dots').setAttribute('d', dots);

  // Finite element mesh, 0.5 m elements
  const E = 12.73, CX = 879, CY = 419.5;
  const line = pts => 'M' + pts.map(p => p.map(v => v.toFixed(1)).join(' ')).join('L');
  // Elements are drawn in towards the column under the right slab
  function pull(x, y) {
    const u = (x - CX) / 153, v = (y - CY) / 153;
    const dx = -Math.sign(Math.round(u * 100)) * 7 * Math.max(0, 1 - Math.abs(u)) * Math.exp(-Math.pow(v * 3.2, 2));
    const dy = -Math.sign(Math.round(v * 100)) * (v < 0 ? 8 : 2) * Math.max(0, 1 - Math.abs(v)) * Math.exp(-Math.pow(u * 3, 2));
    return [x + dx, y + dy];
  }
  let mesh = '';
  for (let k = 1; k < 20; k++) {
    const reg = X0 + k * E;
    const mid = k <= 8 ? X0 + k * 12.12 : 568.5 + (k - 8) * 13.31;
    const low = k <= 8 ? mid : 568.5 + (k - 8) * 13.12;
    if (k < 16) mesh += line([[reg, Y0], [mid, 343.5], [mid, CY]]);
    mesh += line([[low, CY], [reg, 547], [reg, 674]]);
  }
  for (let k = 1; k < 42; k++) mesh += line([[X0, Y0 + k * E], [726, Y0 + k * E]]);
  for (let k = 1; k < 24; k++) {
    const p = [];
    for (let y = 267; y <= 675; y += E) p.push(pull(726 + k * E, y));
    mesh += line(p);
  }
  for (let j = 1; j < 32; j++) {
    const p = [];
    for (let x = 726; x <= 1032; x += E) p.push(pull(x, 267 + j * E));
    mesh += line(p);
  }
  document.getElementById('mesh').setAttribute('d', mesh);

  // Nodes of the model
  const nodes = [[624,139],[675,139],[675,343],[568,343],[568,419],[471,292],[471,368],[471,419],[726,419],[726,267],[879,267],[1031,267],[1031,419],[1031,546],[726,546],[471,546],[471,674],[726,674],[1031,674],[879,419]];
  document.getElementById('nodes').setAttribute('d', nodes.map(([x, y]) => `M${x - 2} ${y - 2}h5v5h-5z`).join(''));
</script>
</body>
</html>
